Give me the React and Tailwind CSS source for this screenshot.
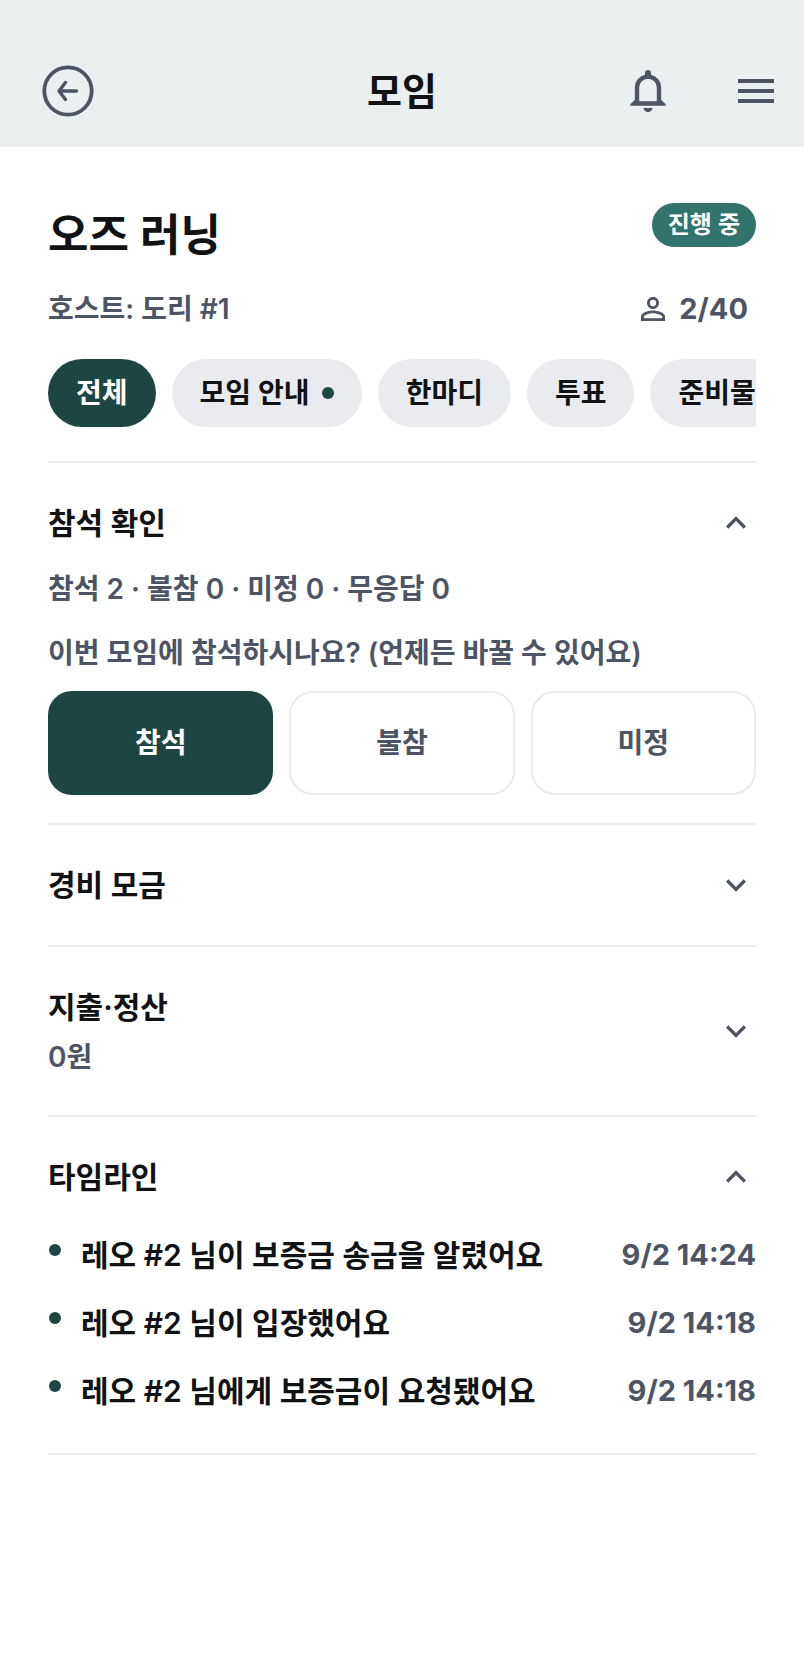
import { useState } from 'react';
import { MdKeyboardArrowDown, MdKeyboardArrowUp, MdMenu, MdPersonOutline } from 'react-icons/md';

const TABS = [
  { id: 'all', label: '전체' },
  { id: 'guide', label: '모임 안내', isNew: true },
  { id: 'comment', label: '한마디' },
  { id: 'vote', label: '투표' },
  { id: 'supplies', label: '준비물' },
];

const ANSWERS = ['참석', '불참', '미정'];

const TIMELINE = [
  { text: '레오 #2 님이 보증금 송금을 알렸어요', time: '9/2 14:24' },
  { text: '레오 #2 님이 입장했어요', time: '9/2 14:18' },
  { text: '레오 #2 님에게 보증금이 요청됐어요', time: '9/2 14:18' },
];

function BackIcon() {
  return (
    <svg viewBox="0 0 52 52" className="size-[52px]" fill="none" stroke="currentColor" aria-hidden="true">
      <circle cx="26" cy="26" r="23.7" strokeWidth="3.8" />
      <path d="M34.5 26H17.5M23.5 17.5 17 26l6.5 8.5" strokeWidth="3.4" strokeLinecap="round" strokeLinejoin="round" />
    </svg>
  );
}

function BellIcon() {
  return (
    <svg viewBox="0 0 48 48" className="size-12" fill="currentColor" aria-hidden="true">
      <path
        fillRule="evenodd"
        d="M24 3a3 3 0 0 1 3 3v1.7A13 13 0 0 1 37.2 20.4V33l4.5 4.3v1.4H6.3v-1.4l4.5-4.3V20.4A13 13 0 0 1 21 7.7V6a3 3 0 0 1 3-3zM15.2 34.3h17.6V20.5a8.8 8.8 0 0 0-17.6 0z"
      />
      <path d="M19.5 41h9a4.5 4 0 0 1-9 0z" />
    </svg>
  );
}

function Header() {
  return (
    <header className="bg-[#ebeff0] pt-[35px]">
      <div className="grid h-28 grid-cols-[1fr_auto_1fr] items-center px-6">
        <button type="button" aria-label="뒤로" className="ml-[18px] justify-self-start text-[#4d5463]">
          <BackIcon />
        </button>
        <h1 className="text-[38px] leading-[52px]">모임</h1>
        <div className="flex items-center gap-[60px] justify-self-end text-[#4d5463]">
          <button type="button" aria-label="알림">
            <BellIcon />
          </button>
          <button type="button" aria-label="메뉴">
            <MdMenu className="size-12" />
          </button>
        </div>
      </div>
    </header>
  );
}

function Section({ title, subtitle, defaultOpen = false, className = 'pb-10', children }) {
  const [open, setOpen] = useState(defaultOpen);
  const Chevron = open ? MdKeyboardArrowUp : MdKeyboardArrowDown;

  return (
    <section className={`border-b-2 border-[#ededee] pt-10 ${open ? className : 'pb-10'}`}>
      <button
        type="button"
        aria-expanded={open}
        onClick={() => setOpen(!open)}
        className="flex w-full items-center justify-between text-left"
      >
        <span className="flex flex-col gap-3">
          <span className="text-[30px] leading-10">{title}</span>
          {subtitle && <span className="text-[28px] leading-9 text-[#4d5463]">{subtitle}</span>}
        </span>
        <Chevron className="size-10 text-[#4d5463]" />
      </button>
      {open && children}
    </section>
  );
}

function Attendance() {
  const [answer, setAnswer] = useState('참석');

  return (
    <>
      <div className="mt-6 flex flex-col gap-5 text-[28px] leading-11 text-[#4d5463]">
        <p>참석 2 · 불참 0 · 미정 0 · 무응답 0</p>
        <p>이번 모임에 참석하시나요? (언제든 바꿀 수 있어요)</p>
      </div>
      <div className="mt-4 grid grid-cols-3 gap-4">
        {ANSWERS.map((item) => (
          <button
            key={item}
            type="button"
            aria-pressed={item === answer}
            onClick={() => setAnswer(item)}
            className={`h-[104px] rounded-3xl border-2 text-[28px] leading-11 ${
              item === answer
                ? 'border-[#1d4642] bg-[#1d4642] text-white'
                : 'border-[#eaebef] bg-white text-[#4d5463]'
            }`}
          >
            {item}
          </button>
        ))}
      </div>
    </>
  );
}

function Timeline() {
  return (
    <ul className="mt-9 flex flex-col gap-6">
      {TIMELINE.map((item) => (
        <li key={item.text} className="flex items-start leading-11">
          <span className="mt-[11px] mr-5 ml-px size-3 shrink-0 rounded-full bg-[#1d4642]" />
          <span className="flex-1 text-[30px]">{item.text}</span>
          <time className="text-[29px] font-bold whitespace-nowrap text-[#4d5463]">{item.time}</time>
        </li>
      ))}
    </ul>
  );
}

export default function App() {
  const [tab, setTab] = useState('all');

  return (
    <div
      lang="ko"
      className="min-h-screen bg-white font-['Inter','Noto_Sans_CJK_KR',sans-serif] font-semibold text-[#111214]"
    >
      <Header />
      <main className="px-12 pt-14">
        <div className="flex items-start justify-between">
          <h2 className="text-[44px] leading-16">오즈 러닝</h2>
          <span className="rounded-full bg-[#32736c] px-4 text-[24px] leading-11 text-white">진행 중</span>
        </div>
        <div className="mt-5 flex items-center justify-between pr-2 leading-11 text-[#4d5463]">
          <p className="text-[28px]">호스트: 도리 #1</p>
          <p className="flex items-center gap-2 text-[29px] font-bold">
            <MdPersonOutline className="size-9" />
            2/40
          </p>
        </div>

        <nav className="mt-7 flex gap-4 overflow-x-auto [scrollbar-width:none]">
          {TABS.map((item) => (
            <button
              key={item.id}
              type="button"
              onClick={() => setTab(item.id)}
              className={`flex h-[68px] shrink-0 items-center gap-3 rounded-full px-7 text-[28px] leading-11 ${
                item.id === tab ? 'bg-[#1d4642] text-white' : 'bg-[#eaebef]'
              }`}
            >
              {item.label}
              {item.isNew && <span className="size-3 rounded-full bg-[#1d4642]" />}
            </button>
          ))}
        </nav>
        <hr className="mt-[34px] border-t-2 border-[#ededee]" />

        <Section title="참석 확인" defaultOpen className="pb-7">
          <Attendance />
        </Section>
        <Section title="경비 모금" />
        <Section title="지출·정산" subtitle="0원" />
        <Section title="타임라인" defaultOpen>
          <Timeline />
        </Section>
      </main>
    </div>
  );
}
